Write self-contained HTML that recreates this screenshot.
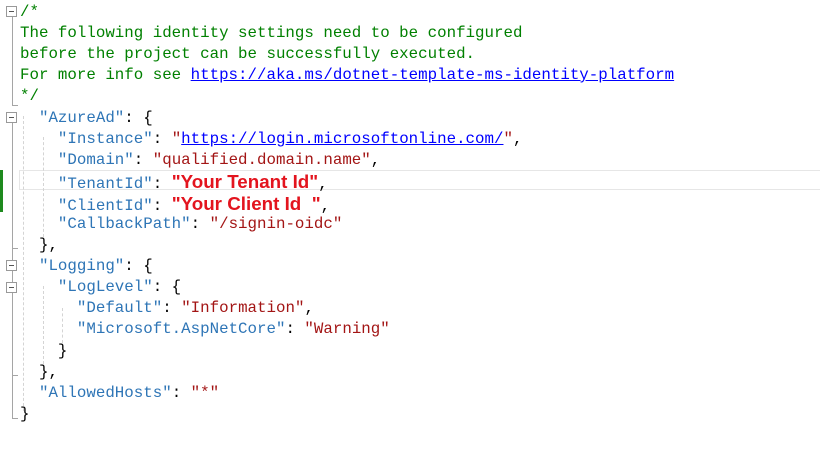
<!DOCTYPE html>
<html><head><meta charset="utf-8"><style>
body{margin:0;width:820px;height:455px;background:#fff;position:relative;overflow:hidden}
.l{position:absolute;left:20px;height:21px;line-height:21px;font-family:"Liberation Mono",monospace;font-size:15.8px;white-space:pre;color:#000;margin-top:2px}
.c{color:#008000}.k{color:#2e75b6}.s{color:#a31515}.a{color:#0000ff;text-decoration:underline}
.r{color:#e3141e;font-family:"Liberation Sans",sans-serif;font-weight:bold;font-size:18.8px}
.box{position:absolute;left:6px;width:9px;height:9px;border:1px solid #999;background:#fff}
.box:after{content:"";position:absolute;left:2px;top:4px;width:5px;height:1px;background:#555}
.v{position:absolute;background:#a5a5a5;width:1px}
.h{position:absolute;background:#a5a5a5;height:1px;width:6px;left:12px}
.g{position:absolute;border-left:1px dashed #d4d4d4;width:0}
</style></head><body>
<div style="position:absolute;left:0;top:170px;width:3px;height:42px;background:#1e8a1e"></div>
<div style="position:absolute;left:19px;top:170px;width:805px;height:18px;border:1px solid #e6e6e6"></div>
<div class="v" style="left:12px;top:17px;height:89px"></div><div class="h" style="top:105px"></div>
<div class="v" style="left:12px;top:123px;height:296px"></div>
<div class="h" style="top:248px"></div><div class="h" style="top:375px"></div><div class="h" style="top:418px"></div>
<div class="g" style="left:23px;top:116px;height:295px"></div>
<div class="g" style="left:43px;top:137px;height:100px"></div>
<div class="g" style="left:43px;top:286px;height:78px"></div>
<div class="g" style="left:62px;top:308px;height:35px"></div>
<div class="box" style="top:6px"></div>
<div class="box" style="top:112px"></div>
<div class="box" style="top:260px"></div>
<div class="box" style="top:282px"></div>
<div class="l c" style="top:0px">/*</div>
<div class="l c" style="top:21px">The following identity settings need to be configured</div>
<div class="l c" style="top:42px">before the project can be successfully executed.</div>
<div class="l c" style="top:63px">For more info see <span class="a">https://aka.ms/dotnet-template-ms-identity-platform</span></div>
<div class="l c" style="top:84px">*/</div>
<div class="l" style="top:106px">  <span class="k">"AzureAd"</span>: {</div>
<div class="l" style="top:127px">    <span class="k">"Instance"</span>: <span class="s">"<span class="a">https://login.microsoftonline.com/</span>"</span>,</div>
<div class="l" style="top:148px">    <span class="k">"Domain"</span>: <span class="s">"qualified.domain.name"</span>,</div>
<div class="l" style="top:169px">    <span class="k">"TenantId"</span>: <span class="r">"Your Tenant Id"</span>,</div>
<div class="l" style="top:191px">    <span class="k">"ClientId"</span>: <span class="r">"Your Client Id  "</span>,</div>
<div class="l" style="top:212px">    <span class="k">"CallbackPath"</span>: <span class="s">"/signin-oidc"</span></div>
<div class="l" style="top:233px">  },</div>
<div class="l" style="top:254px">  <span class="k">"Logging"</span>: {</div>
<div class="l" style="top:275px">    <span class="k">"LogLevel"</span>: {</div>
<div class="l" style="top:296px">      <span class="k">"Default"</span>: <span class="s">"Information"</span>,</div>
<div class="l" style="top:317px">      <span class="k">"Microsoft.AspNetCore"</span>: <span class="s">"Warning"</span></div>
<div class="l" style="top:339px">    }</div>
<div class="l" style="top:360px">  },</div>
<div class="l" style="top:381px">  <span class="k">"AllowedHosts"</span>: <span class="s">"*"</span></div>
<div class="l" style="top:402px">}</div>
</body></html>
